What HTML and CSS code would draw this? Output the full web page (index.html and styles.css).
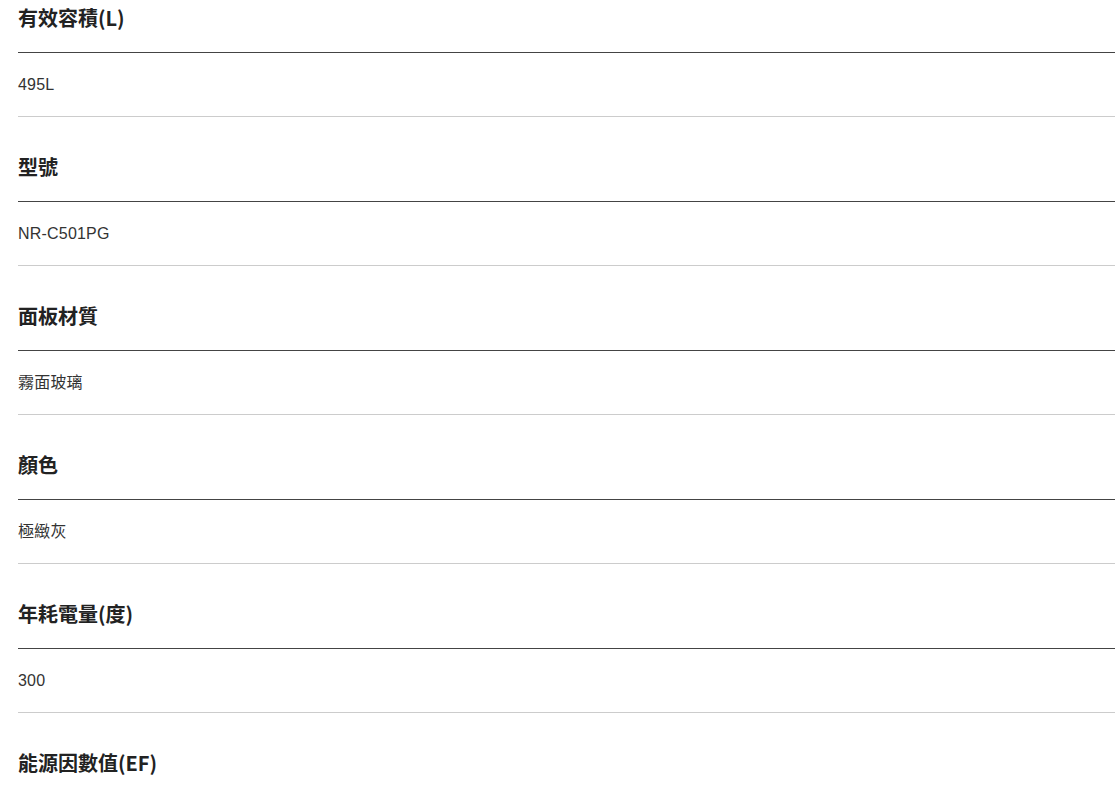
FILE: index.html
```html
<!DOCTYPE html>
<html lang="zh-Hant">
<head>
    <meta charset="UTF-8">
    <title>規格</title>
    <link rel="stylesheet" href="styles.css">
</head>
<body>
    <div class="spec-list">
        <div class="spec-item">
            <h3 class="spec-title">有效容積(L)</h3>
            <div class="spec-value">495L</div>
        </div>
        <div class="spec-item">
            <h3 class="spec-title">型號</h3>
            <div class="spec-value">NR-C501PG</div>
        </div>
        <div class="spec-item">
            <h3 class="spec-title">面板材質</h3>
            <div class="spec-value">霧面玻璃</div>
        </div>
        <div class="spec-item">
            <h3 class="spec-title">顏色</h3>
            <div class="spec-value">極緻灰</div>
        </div>
        <div class="spec-item">
            <h3 class="spec-title">年耗電量(度)</h3>
            <div class="spec-value">300</div>
        </div>
        <div class="spec-item">
            <h3 class="spec-title">能源因數值(EF)</h3>
            <div class="spec-value">3.72</div>
        </div>
    </div>
</body>
</html>
```

FILE: styles.css
```css
* {
    margin: 0;
    padding: 0;
    box-sizing: border-box;
}

body {
    font-family: "Liberation Sans", "Noto Sans CJK TC", sans-serif;
    background: #fff;
    color: #333;
}

.spec-list {
    padding-left: 18px;
}

.spec-title {
    font-family: "Noto Sans CJK TC", sans-serif;
    font-size: 20px;
    font-weight: 700;
    line-height: 30px;
    color: #222;
    padding: 35px 0 19px;
    border-bottom: 1px solid #444;
}

.spec-item:first-child .spec-title {
    padding-top: 3px;
}

.spec-value {
    font-size: 16px;
    line-height: 20px;
    letter-spacing: 0.2px;
    color: #333;
    padding: 22px 0 21px;
    border-bottom: 1px solid #ccc;
}
```
